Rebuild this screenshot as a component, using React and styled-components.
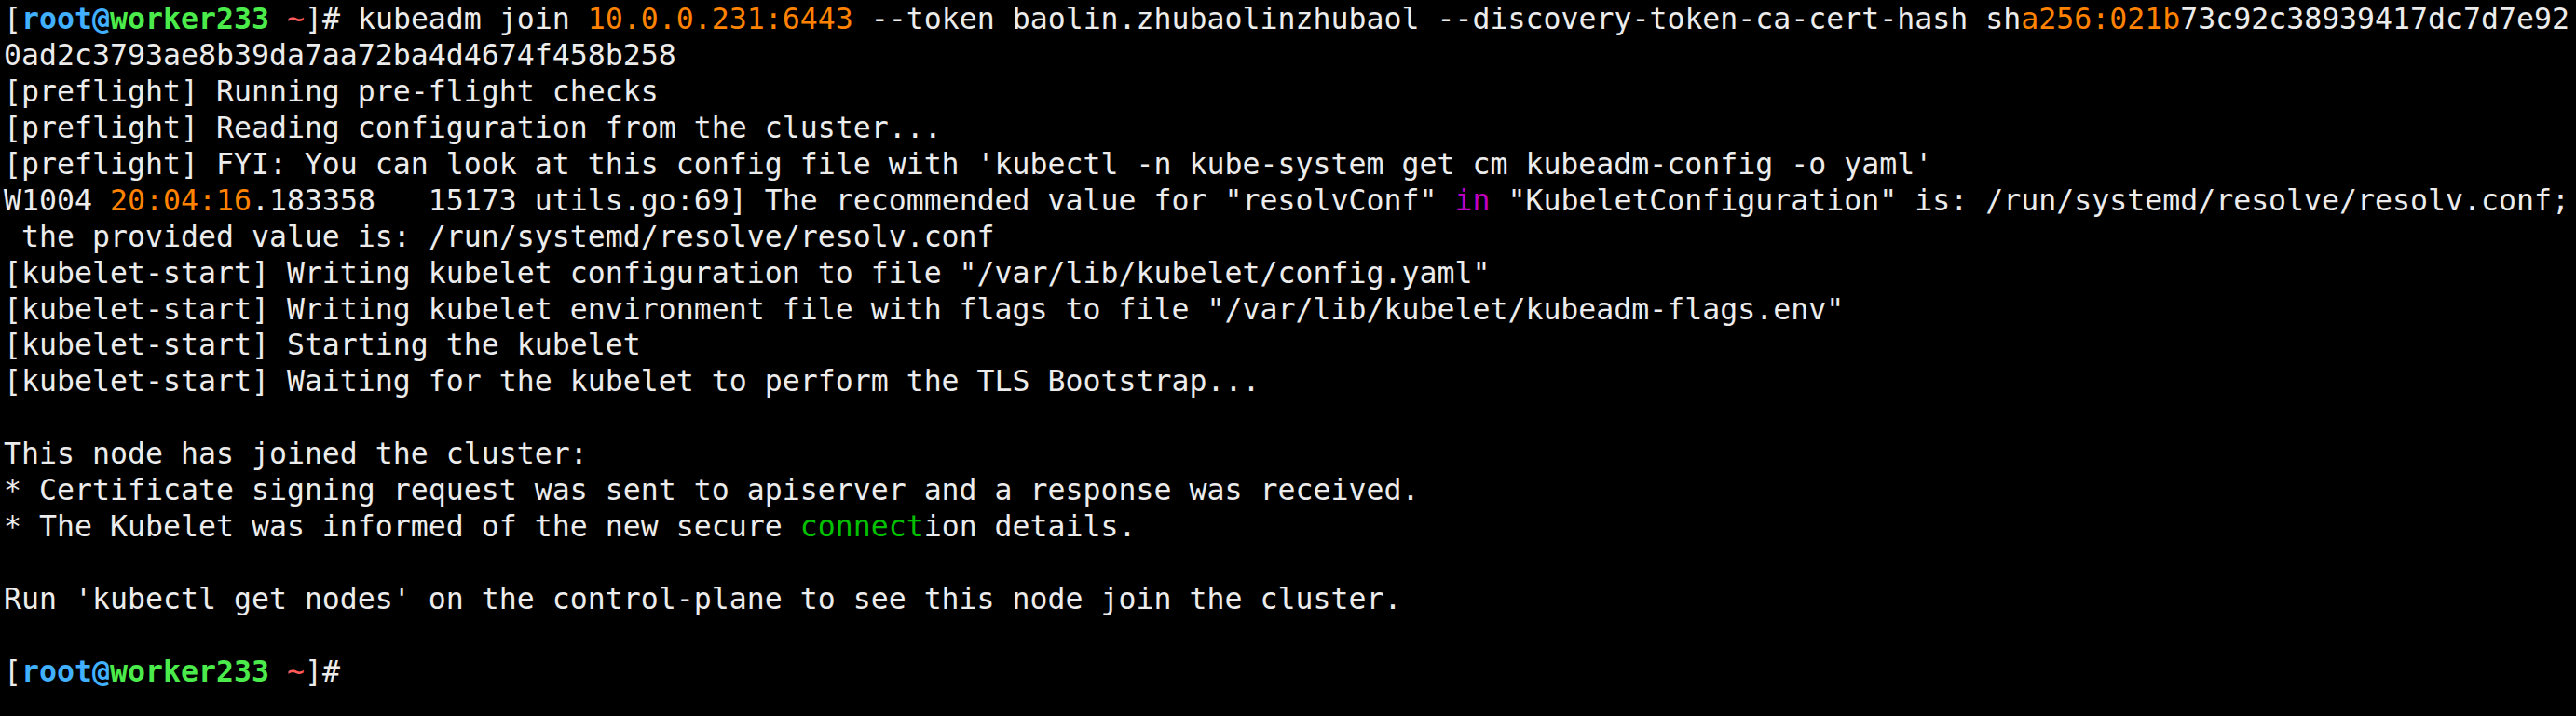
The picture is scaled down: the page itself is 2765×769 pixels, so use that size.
import React from "react";
import styled, { createGlobalStyle } from "styled-components";

const GlobalStyle = createGlobalStyle`
  html, body {
    margin: 0;
    padding: 0;
    background: #000;
  }
`;

const colors = {
  text: "#ececec",
  blue: "#40b0ff",
  green: "#4ceb4c",
  red: "#ff5a5a",
  orange: "#ff8300",
  magenta: "#c000c0",
  dgreen: "#00c000",
};

const Terminal = styled.div`
  width: 2765px;
  height: 769px;
  box-sizing: border-box;
  background: #000;
  color: ${colors.text};
  font-family: "DejaVu Sans Mono", monospace;
  font-size: 31.56px;
  line-height: 38.94px;
  padding: 1px 0 0 4px;
  overflow: hidden;
`;

const Line = styled.div`
  white-space: pre;
  height: 38.94px;
`;

const Seg = styled.span`
  color: ${(p) => colors[p.$c] || colors.text};
  font-weight: ${(p) => (p.$bold ? 700 : 400)};
`;

const Prompt = () => (
  <>
    {"["}
    <Seg $c="blue" $bold>root@</Seg>
    <Seg $c="green" $bold>worker233</Seg>
    {" "}
    <Seg $c="red">~</Seg>
    {"]#"}
  </>
);

const lines = [
  <>
    <Prompt />
    {" kubeadm join "}
    <Seg $c="orange">10.0.0.231:6443</Seg>
    {" --token baolin.zhubaolinzhubaol --discovery-token-ca-cert-hash sh"}
    <Seg $c="orange">a256:021b</Seg>
    {"73c92c38939417dc7d7e92"}
  </>,
  "0ad2c3793ae8b39da7aa72ba4d4674f458b258",
  "[preflight] Running pre-flight checks",
  "[preflight] Reading configuration from the cluster...",
  "[preflight] FYI: You can look at this config file with 'kubectl -n kube-system get cm kubeadm-config -o yaml'",
  <>
    {"W1004 "}
    <Seg $c="orange">20:04:16</Seg>
    {'.183358   15173 utils.go:69] The recommended value for "resolvConf" '}
    <Seg $c="magenta">in</Seg>
    {' "KubeletConfiguration" is: /run/systemd/resolve/resolv.conf;'}
  </>,
  " the provided value is: /run/systemd/resolve/resolv.conf",
  '[kubelet-start] Writing kubelet configuration to file "/var/lib/kubelet/config.yaml"',
  '[kubelet-start] Writing kubelet environment file with flags to file "/var/lib/kubelet/kubeadm-flags.env"',
  "[kubelet-start] Starting the kubelet",
  "[kubelet-start] Waiting for the kubelet to perform the TLS Bootstrap...",
  "",
  "This node has joined the cluster:",
  "* Certificate signing request was sent to apiserver and a response was received.",
  <>
    {"* The Kubelet was informed of the new secure "}
    <Seg $c="dgreen">connect</Seg>
    {"ion details."}
  </>,
  "",
  "Run 'kubectl get nodes' on the control-plane to see this node join the cluster.",
  "",
  <Prompt />,
];

const App = () => {
  return (
    <Terminal>
      <GlobalStyle />
      {lines.map((line, i) => (
        <Line key={i}>{line === "" ? "\u00a0" : line}</Line>
      ))}
    </Terminal>
  );
};

export default App;
